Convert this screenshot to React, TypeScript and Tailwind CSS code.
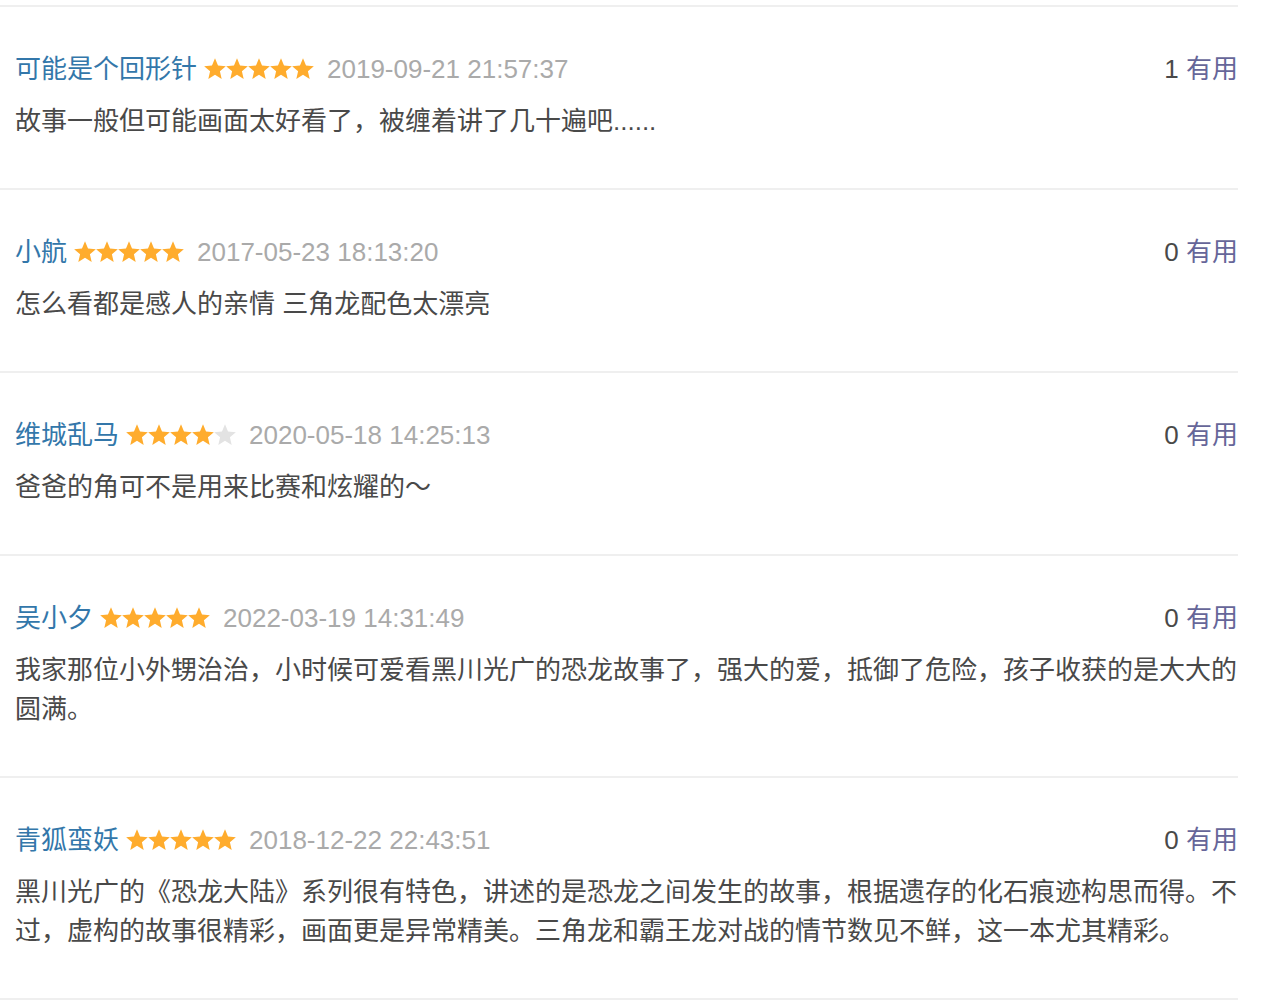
import React from "react";

type Comment = {
  name: string;
  rating: number;
  time: string;
  votes: number;
  text: string;
};

const comments: Comment[] = [
  {
    name: "可能是个回形针",
    rating: 5,
    time: "2019-09-21 21:57:37",
    votes: 1,
    text: "故事一般但可能画面太好看了，被缠着讲了几十遍吧......",
  },
  {
    name: "小航",
    rating: 5,
    time: "2017-05-23 18:13:20",
    votes: 0,
    text: "怎么看都是感人的亲情 三角龙配色太漂亮",
  },
  {
    name: "维城乱马",
    rating: 4,
    time: "2020-05-18 14:25:13",
    votes: 0,
    text: "爸爸的角可不是用来比赛和炫耀的～",
  },
  {
    name: "吴小夕",
    rating: 5,
    time: "2022-03-19 14:31:49",
    votes: 0,
    text: "我家那位小外甥治治，小时候可爱看黑川光广的恐龙故事了，强大的爱，抵御了危险，孩子收获的是大大的圆满。",
  },
  {
    name: "青狐蛮妖",
    rating: 5,
    time: "2018-12-22 22:43:51",
    votes: 0,
    text: "黑川光广的《恐龙大陆》系列很有特色，讲述的是恐龙之间发生的故事，根据遗存的化石痕迹构思而得。不过，虚构的故事很精彩，画面更是异常精美。三角龙和霸王龙对战的情节数见不鲜，这一本尤其精彩。",
  },
];

// fat five-point star, 22 x 21
const STAR =
  "11,0.3 14.06,7.59 21.94,8.25 15.95,13.41 17.76,21.1 11,17 4.24,21.1 6.05,13.41 0.06,8.25 7.94,7.59";

const Stars: React.FC<{ rating: number }> = ({ rating }) => (
  <span className="mb-[2px] ml-[7px] inline-flex items-center">
    {[0, 1, 2, 3, 4].map((i) => (
      <svg key={i} width="22" height="21" viewBox="0 0 22 21.2" className="block">
        <polygon points={STAR} fill={i < rating ? "#ffac2d" : "#e3e3e3"} />
      </svg>
    ))}
  </span>
);

export default function App() {
  return (
    <div
      className="min-h-screen bg-white pt-[5px]"
      style={{ fontFamily: '"Liberation Sans", "Noto Sans CJK SC", sans-serif' }}
    >
      <div className="w-[1238px] border-b-2 border-[#efefef]">
        {comments.map((c) => (
          <div
            key={c.name}
            className="border-t-2 border-[#efefef] pl-[15px] pt-[43px] pb-[47px] text-[26px]"
          >
            <div className="flex h-[39px] items-center justify-between leading-[39px]">
              <div className="flex items-center">
                <span className="text-[#3377aa]">{c.name}</span>
                <Stars rating={c.rating} />
                <span className="ml-[13px] text-[#aaaaaa]">{c.time}</span>
              </div>
              <div>
                <span className="text-[#494949]">{c.votes}</span>{" "}
                <span className="text-[#666699]">有用</span>
              </div>
            </div>
            <p className="mt-[13px] leading-[39px] text-[#494949]">{c.text}</p>
          </div>
        ))}
      </div>
    </div>
  );
}
